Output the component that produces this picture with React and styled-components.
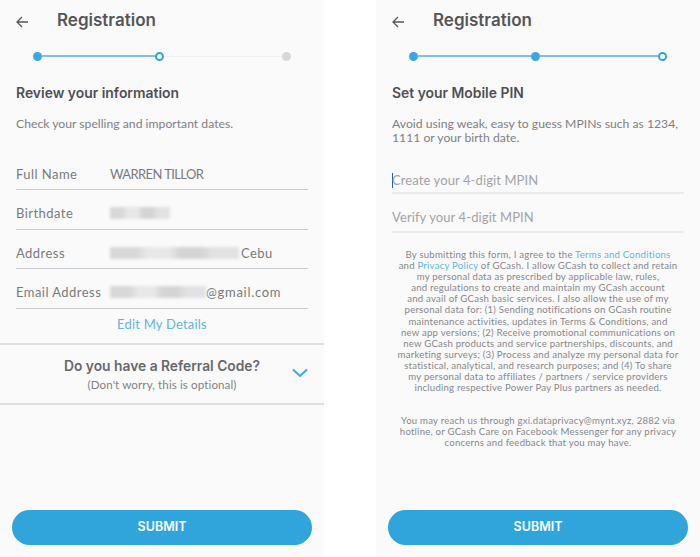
import React from "react";
import styled, { createGlobalStyle } from "styled-components";

const GlobalStyle = createGlobalStyle`
  html, body { margin: 0; padding: 0; background: #fff; }
`;

const Page = styled.div`
  width: 700px;
  height: 557px;
  display: flex;
  justify-content: space-between;
  overflow: hidden;
  background: #fff;
`;

const Screen = styled.section`
  width: 324px;
  height: 557px;
  background: #fafafa;
  display: flex;
  flex-direction: column;
  font-family: "Lato", "Open Sans", sans-serif;
  color: #7a7a7e;
`;

const Header = styled.header`
  height: 40px;
  display: flex;
  align-items: center;
  padding-left: 16px;
  gap: 29px;
  svg { flex: none; margin-top: 4px; }
`;

const Title = styled.h1`
  margin: 0;
  font: 600 17px/24px "Inter", sans-serif;
  color: #55555a;
`;

const Stepper = styled.div`
  margin: 8px 0 0 33px;
  height: 16px;
  display: flex;
  align-items: center;
`;

const Dot = styled.span`
  flex: none;
  width: 9px;
  height: 9px;
  box-sizing: border-box;
  border-radius: 50%;
  background: ${p => (p.$state === "done" ? "#3ba7e2" : p.$state === "todo" ? "#d8d8d8" : "#fff")};
  border: ${p => (p.$state === "now" ? "2px solid #2fa4d8" : "none")};
`;

const Line = styled.span`
  flex: none;
  width: ${p => p.$w}px;
  height: ${p => (p.$on ? 2 : 1)}px;
  background: ${p => (p.$on ? "#7dc0e2" : "#f0f0f0")};
`;

const Section = styled.div`
  padding: 0 16px;
  display: flex;
  flex-direction: column;
`;

const Heading = styled.h2`
  margin: 19px 0 0;
  font: 600 13.9px/20px "Inter", sans-serif;
  color: #4f4f54;
`;

const Intro = styled.p`
  margin: 14px 0 0;
  font-size: 12.2px;
  line-height: 13.5px;
  color: #808084;
`;

const Rows = styled.div`
  margin-top: 19.9px;
  display: flex;
  flex-direction: column;
`;

const Row = styled.div`
  height: 39.6px;
  box-sizing: border-box;
  padding-top: 8px;
  width: 292px;
  display: flex;
  align-items: center;
  font-size: 13px;
  letter-spacing: 0.45px;
  border-bottom: 1px solid #c9ccd0;
`;

const Label = styled.span`
  flex: none;
  width: 94px;
`;

const Name = styled.span`
  letter-spacing: -0.6px;
`;

const Blur = styled.span`
  flex: none;
  display: inline-block;
  width: ${p => p.$w}px;
  height: 12px;
  background: linear-gradient(90deg, #d8d8d8 0 20%, #e8e8e8 30% 45%, #d4d4d4 55% 70%, #e2e2e2 80% 100%);
  filter: blur(1.5px);
`;

const Trail = styled.span`
  margin-left: ${p => p.$gap || 0}px;
  letter-spacing: ${p => p.$spacing || 0.45}px;
`;

const EditLink = styled.div`
  margin-top: 6px;
  height: 18px;
  text-align: center;
  font-size: 13px;
  line-height: 18px;
  letter-spacing: 0.2px;
  color: #62b4de;
`;

const Referral = styled.div`
  margin-top: 10px;
  height: 58.5px;
  position: relative;
  text-align: center;
  border-top: 2px solid #dedfe0;
  border-bottom: 2px solid #dedfe0;
  svg { position: absolute; right: 16px; top: 23px; }
`;

const ReferralTitle = styled.div`
  margin-top: 12px;
  font: 600 13.8px/19px "Inter", sans-serif;
  color: #68686c;
`;

const ReferralNote = styled.div`
  margin-top: 1.5px;
  font-size: 11.6px;
  line-height: 16px;
  letter-spacing: 0.1px;
  color: #828286;
`;

const Spacer = styled.div`
  flex: 1;
`;

const Submit = styled.button`
  flex: none;
  margin: 0 12px 12px;
  height: 35px;
  padding: 0 0 2px;
  border: 0;
  border-radius: 18px;
  background: #2fa5dc;
  color: #fff;
  font: 600 12.5px/16px "Inter", sans-serif;
`;

const Field = styled.div`
  width: 292px;
  height: ${p => p.$h}px;
  margin-top: ${p => p.$top}px;
  box-sizing: border-box;
  padding-bottom: ${p => p.$pad}px;
  display: flex;
  align-items: flex-end;
  font-size: 13px;
  line-height: 16px;
  letter-spacing: 0.1px;
  color: #a3a3a7;
  border-bottom: 2px solid #ebebeb;
`;

const Caret = styled.span`
  width: 1px;
  height: 15px;
  background: #2a5db0;
  margin-right: -1px;
`;

const Legal = styled.p`
  margin: ${p => p.$top}px 0 0;
  width: 300px;
  align-self: center;
  text-align: center;
  font-size: 9.6px;
  line-height: 11.1px;
  letter-spacing: 0.22px;
  color: #87878b;
  a { color: #5fb6d8; text-decoration: none; }
`;

const BackArrow = () => (
  <svg width="12" height="12" viewBox="0 0 12 12" fill="none" stroke="#55555a" strokeWidth="1.3">
    <path d="M12 6H1M6 1L1 6l5 5" />
  </svg>
);

const Chevron = () => (
  <svg width="16" height="10" viewBox="0 0 16 10" fill="none" stroke="#3ba7dc" strokeWidth="1.9">
    <path d="M1 1.5l7 6.5 7-6.5" />
  </svg>
);

const Steps = ({ states }) => (
  <Stepper>
    <Dot $state={states[0]} />
    <Line $on $w={113} />
    <Dot $state={states[1]} />
    <Line $on={states[2] !== "todo"} $w={118} />
    <Dot $state={states[2]} />
  </Stepper>
);

const TopBar = () => (
  <Header>
    <BackArrow />
    <Title>Registration</Title>
  </Header>
);

export default function App() {
  return (
    <Page>
      <GlobalStyle />
      <Screen>
        <TopBar />
        <Steps states={["done", "now", "todo"]} />
        <Section>
          <Heading>Review your information</Heading>
          <Intro>Check your spelling and important dates.</Intro>
          <Rows>
            <Row><Label>Full Name</Label><Name>WARREN TILLOR</Name></Row>
            <Row><Label>Birthdate</Label><Blur $w={60} /></Row>
            <Row><Label>Address</Label><Blur $w={129} /><Trail $gap={2}>Cebu</Trail></Row>
            <Row><Label>Email Address</Label><Blur $w={96} /><Trail $spacing={0.7}>@gmail.com</Trail></Row>
          </Rows>
        </Section>
        <EditLink>Edit My Details</EditLink>
        <Referral>
          <ReferralTitle>Do you have a Referral Code?</ReferralTitle>
          <ReferralNote>(Don't worry, this is optional)</ReferralNote>
          <Chevron />
        </Referral>
        <Spacer />
        <Submit>SUBMIT</Submit>
      </Screen>
      <Screen>
        <TopBar />
        <Steps states={["done", "done", "now"]} />
        <Section>
          <Heading>Set your Mobile PIN</Heading>
          <Intro>Avoid using weak, easy to guess MPINs such as 1234,<br />1111 or your birth date.</Intro>
          <Field $h={39} $top={10.5} $pad={4}><Caret />Create your 4-digit MPIN</Field>
          <Field $h={39.5} $top={0} $pad={6}>Verify your 4-digit MPIN</Field>
          <Legal $top={16}>
            By submitting this form, I agree to the <a>Terms and Conditions</a><br />
            and <a>Privacy Policy</a> of GCash. I allow GCash to collect and retain<br />
            my personal data as prescribed by applicable law, rules,<br />
            and regulations to create and maintain my GCash account<br />
            and avail of GCash basic services. I also allow the use of my<br />
            personal data for: (1) Sending notifications on GCash routine<br />
            maintenance activities, updates in Terms &amp; Conditions, and<br />
            new app versions; (2) Receive promotional communications on<br />
            new GCash products and service partnerships, discounts, and<br />
            marketing surveys; (3) Process and analyze my personal data for<br />
            statistical, analytical, and research purposes; and (4) To share<br />
            my personal data to affiliates / partners / service providers<br />
            including respective Power Pay Plus partners as needed.
          </Legal>
          <Legal $top={22}>
            You may reach us through gxi.dataprivacy@mynt.xyz, 2882 via<br />
            hotline, or GCash Care on Facebook Messenger for any privacy<br />
            concerns and feedback that you may have.
          </Legal>
        </Section>
        <Spacer />
        <Submit>SUBMIT</Submit>
      </Screen>
    </Page>
  );
}
